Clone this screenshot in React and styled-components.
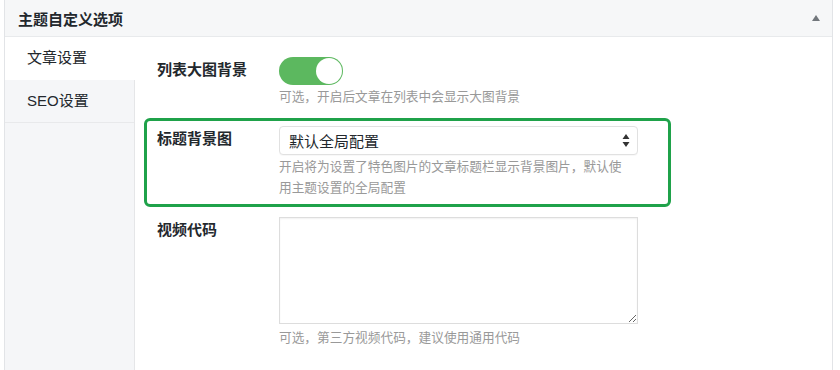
import React from 'react'
import styled, { createGlobalStyle } from 'styled-components'

const GlobalStyle = createGlobalStyle`
    body {
        margin: 0;
        background: #fff;
        font-family: "Liberation Sans", "Noto Sans CJK SC", sans-serif;
        color: #23282d;
    }
`

const Panel = styled.div`
    margin-left: 4px;
    width: 827px;
    height: 370px;
    border-left: 1px solid #e2e4e7;
    border-right: 1px solid #e2e4e7;
    display: flex;
    flex-direction: column;
    overflow: hidden;
`

const Header = styled.div`
    height: 36px;
    flex: none;
    display: flex;
    align-items: center;
    justify-content: space-between;
    padding: 0 12px 0 13px;
    background: #f6f7f8;
    border-bottom: 1px solid #e8eaec;

    h2 {
        margin: 0;
        font-size: 15px;
        font-weight: 700;
        color: #23282d;
    }
`

const Body = styled.div`
    flex: 1;
    display: flex;
`

const Sidebar = styled.ul`
    list-style: none;
    margin: 0;
    padding: 0;
    width: 129px;
    flex: none;
    background: #f5f6f8;
    border-right: 1px solid #e5e6e8;
`

const Tab = styled.li`
    height: 42px;
    line-height: 42px;
    padding-left: 22px;
    font-size: 15px;
    color: #23282d;
    border-bottom: 1px solid #e8e9eb;
    background: ${props => (props.active ? '#fff' : 'transparent')};
    margin-right: ${props => (props.active ? '-1px' : '0')};
    border-bottom-color: ${props => (props.active ? '#fff' : '#e8e9eb')};
`

const Content = styled.div`
    flex: 1;
    padding: 12px 0 0 9px;
`

const Row = styled.div`
    width: 481px;
    display: grid;
    grid-template-columns: 122px 359px;
    padding: 5px 30px 5px 10px;
    margin-bottom: 2px;
    border: 3px solid ${props => (props.highlight ? '#1fa24a' : 'transparent')};
    border-radius: 6px;
`

const Label = styled.div`
    padding-top: 3px;
    font-size: 15px;
    line-height: 20px;
    font-weight: 700;
    color: #23282d;
`

const Field = styled.div`
    display: flex;
    flex-direction: column;
    align-items: flex-start;
`

const Desc = styled.p`
    max-width: 352px;
    margin: ${props => props.gap || 2}px 0 0;
    font-size: 12.7px;
    line-height: 21px;
    color: #999;
`

const Switch = styled.div`
    position: relative;
    width: 64px;
    height: 28px;
    border-radius: 14px;
    background: #5cb85f;
`

const Knob = styled.span`
    position: absolute;
    top: 1px;
    right: 1px;
    width: 26px;
    height: 26px;
    border-radius: 50%;
    background: #fff;
`

const Select = styled.div`
    box-sizing: border-box;
    width: 359px;
    height: 29px;
    display: flex;
    align-items: center;
    justify-content: space-between;
    padding: 0 7px 0 9px;
    border: 1px solid #e1e1e1;
    border-radius: 4px;
    background: #fff;
    box-shadow: 0 1px 1px rgba(0, 0, 0, 0.03);
    font-size: 15px;
    color: #23282d;
`

const TextArea = styled.textarea`
    box-sizing: border-box;
    width: 359px;
    height: 107px;
    margin: 0;
    border: 1px solid #ddd;
    border-radius: 0;
    box-shadow: inset 0 1px 2px rgba(0, 0, 0, 0.06);
    resize: vertical;
    font-family: inherit;
`

const Collapse = () => (
    <svg width="8" height="6" viewBox="0 0 8 6">
        <path d="M4 0 L8 6 L0 6 Z" fill="#72777c" />
    </svg>
)

const Arrows = () => (
    <svg width="8" height="13" viewBox="0 0 8 13">
        <path d="M4 0 L7.5 5 L0.5 5 Z M4 13 L7.5 8 L0.5 8 Z" fill="#333" />
    </svg>
)

export default function App() {
    return (
        <>
            <GlobalStyle />
            <Panel>
                <Header>
                    <h2>主题自定义选项</h2>
                    <Collapse />
                </Header>
                <Body>
                    <Sidebar>
                        <Tab active>文章设置</Tab>
                        <Tab>SEO设置</Tab>
                    </Sidebar>
                    <Content>
                        <Row>
                            <Label>列表大图背景</Label>
                            <Field>
                                <Switch>
                                    <Knob />
                                </Switch>
                                <Desc>可选，开启后文章在列表中会显示大图背景</Desc>
                            </Field>
                        </Row>
                        <Row highlight>
                            <Label>标题背景图</Label>
                            <Field>
                                <Select>
                                    <span>默认全局配置</span>
                                    <Arrows />
                                </Select>
                                <Desc>
                                    开启将为设置了特色图片的文章标题栏显示背景图片，默认使用主题设置的全局配置
                                </Desc>
                            </Field>
                        </Row>
                        <Row>
                            <Label>视频代码</Label>
                            <Field>
                                <TextArea />
                                <Desc gap={4}>可选，第三方视频代码，建议使用通用代码</Desc>
                            </Field>
                        </Row>
                    </Content>
                </Body>
            </Panel>
        </>
    )
}
